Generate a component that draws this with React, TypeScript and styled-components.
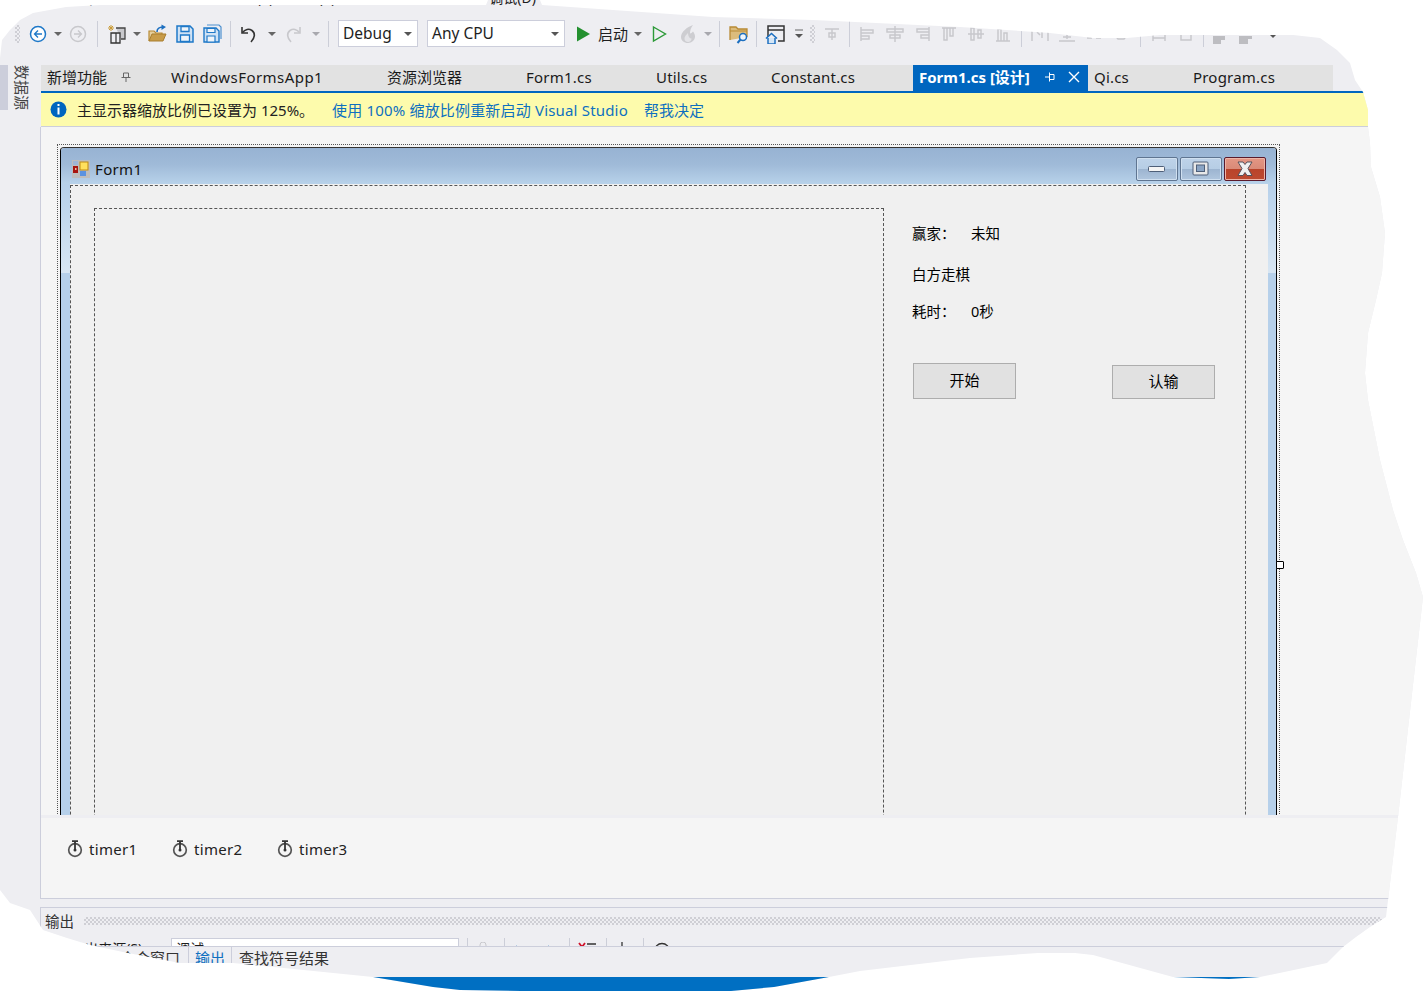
import React from "react";
import styled, { createGlobalStyle } from "styled-components";

const Global = createGlobalStyle`
  html, body { margin: 0; padding: 0; background: #fff; }
  body { font-family: "Noto Sans", "Noto Sans CJK SC", sans-serif; overflow: hidden; }
`;

const outline = [
  [0,58],[2,40],[10,30],[20,20],[33,13],[66,7],[100,5],[486,5],[488,0],[540,0],[542,5],[613,10],[713,17],[813,20],[960,27],
  [1050,33],[1093,38],[1127,38],[1160,35],[1293,35],[1320,38],[1337,50],[1350,63],[1355,80],[1363,92],[1368,110],[1368,127],
  [1370,143],[1371,167],[1380,197],[1385,233],[1382,273],[1376,300],[1368,333],[1365,373],[1368,400],[1380,460],[1393,510],
  [1403,540],[1416,573],[1423,597],[1398,817],[1386,917],[1370,927],[1356,937],[1343,947],[1327,963],[1260,977],[1229,979],
  [1173,977],[1093,955],[1075,953],[1038,953],[970,958],[860,971],[829,977],[774,987],[731,991],[521,991],[460,990],[433,987],
  [373,977],[233,963],[180,963],[123,952],[90,945],[67,938],[43,930],[30,910],[10,903],[0,890],
].map(([x, y]) => `${x}px ${y}px`).join(",");

const Root = styled.div`
  width: 1423px; height: 991px; background: #eeeef2; color: #1e1e1e;
  display: flex; flex-direction: column; overflow: hidden;
  clip-path: polygon(${outline});
  font-size: 15px;
`;
const MenuBar = styled.div`
  height: 20px; display: flex; align-items: flex-start; font-size: 14px; line-height: 20px;
`;
const MenuItem = styled.span<{ $ml: number }>`
  margin-left: ${p => p.$ml}px; margin-top: -12px; white-space: nowrap; color: #1e1e1e;
`;
const Toolbar = styled.div`
  height: 27px; padding-left: 15px; display: flex; align-items: center; margin-bottom: 18px;
`;
const Tool = styled.div<{ $w?: number; $ml?: number }>`
  width: ${p => p.$w ?? 20}px; height: 22px; margin-left: ${p => p.$ml ?? 0}px; flex: none;
  display: flex; align-items: center; justify-content: center;
`;
const Grip = styled.div<{ $ml?: number }>`
  width: 5px; height: 18px; flex: none; margin-left: ${p => p.$ml ?? 0}px;
  background: conic-gradient(#cfcfd5 25%, transparent 0 50%, #cfcfd5 0 75%, transparent 0) 0 0 / 4px 4px;
`;
const Sep = styled.div<{ $ml?: number }>`
  width: 1px; height: 26px; flex: none; background: #ccced8; margin-left: ${p => p.$ml ?? 0}px;
`;
const Combo = styled.div<{ $w: number; $ml: number }>`
  width: ${p => p.$w}px; height: 27px; margin-left: ${p => p.$ml}px; flex: none; box-sizing: border-box;
  background: #fff; border: 1px solid #cccedb; padding: 0 4px; position: relative;
  font-size: 15.5px; line-height: 25px; color: #1e1e1e;
`;
const ComboArrow = styled.span`
  position: absolute; right: 5px; top: 11px; width: 0; height: 0;
  border-left: 4px solid transparent; border-right: 4px solid transparent; border-top: 4px solid #555;
`;
const ToolLabel = styled.div<{ $ml: number }>`
  width: 32px; margin-left: ${p => p.$ml}px; flex: none; font-size: 15px; white-space: nowrap; color: #1e1e1e;
`;
const Caret = styled.span<{ $off?: boolean }>`
  width: 0; height: 0; border-left: 4px solid transparent; border-right: 4px solid transparent;
  border-top: 4px solid ${p => (p.$off ? "#a8a8ae" : "#666")};
`;
const Body = styled.div`
  display: flex; flex: 1; min-height: 0;
`;
const SideRail = styled.div`
  width: 40px; flex: none; display: flex; align-items: flex-start;
`;
const RailMarker = styled.div`
  width: 8px; height: 45px; background: #cccedb;
`;
const RailLabel = styled.div`
  writing-mode: vertical-rl; text-orientation: sideways; margin-left: 6px; width: 16px; height: 45px;
  font-size: 15px; line-height: 16px; color: #444; white-space: nowrap;
`;
const Main = styled.div`
  flex: 1; min-width: 0; display: flex; flex-direction: column; margin-left: 0;
`;
const TabStrip = styled.div`
  display: flex; height: 26px; margin-left: 1px; width: 1292px; background: #e2e2e2;
`;
const Tab = styled.div<{ $w: number; $active?: boolean; $ls?: number }>`
  width: ${p => p.$w}px; flex: none; box-sizing: border-box; padding: 0 0 2px 6px;
  display: flex; align-items: center; position: relative; white-space: nowrap;
  font-size: 15px; line-height: 24px;
  letter-spacing: ${p => p.$ls ?? 0}px;
  font-weight: ${p => (p.$active ? 700 : 400)};
  background: ${p => (p.$active ? "#0066bf" : "transparent")};
  color: ${p => (p.$active ? "#fff" : "#1a1a1a")};
`;
const TabIcon = styled.span<{ $ml: number }>`
  margin-left: ${p => p.$ml}px; display: inline-flex; font-weight: 400;
`;
const Accent = styled.div`
  height: 2px; background: #0066bf; margin-left: 1px;
`;
const InfoBar = styled.div`
  height: 33px; margin-left: 1px; display: flex; align-items: center; padding-left: 9px;
  background: #fdfbac; border-bottom: 1px solid #cccedb; white-space: nowrap; font-size: 15px; color: #222;
`;
const InfoText = styled.span`
  margin-left: 10px; width: 255px;
`;
const InfoLink = styled.span<{ $w?: number; $ls?: number }>`
  color: #0e70c0; width: ${p => (p.$w ? `${p.$w}px` : "auto")}; letter-spacing: ${p => p.$ls ?? 0}px;
`;
const Surface = styled.div`
  height: 688px; background: #f5f5f5; border-left: 1px solid #cccedb; overflow: hidden;
  padding: 17px 0 0 16px; box-sizing: border-box;
`;
const Selection = styled.div`
  width: 1223px; height: 800px; box-sizing: border-box; border: 1px dotted #555; padding: 2px 0 0 2px; position: relative;
`;
const Handle = styled.div`
  position: absolute; right: -5px; top: 416px; width: 8px; height: 8px; box-sizing: border-box;
  background: #fff; border: 1px solid #000; border-radius: 1px;
`;
const FormWindow = styled.div`
  width: 1217px; height: 780px; box-sizing: border-box; border: 1px solid #111; border-radius: 4px 4px 0 0;
  border-color: #333 #000 #000 #000; display: flex; flex-direction: column;
`;
const TitleBar = styled.div`
  height: 36px; flex: none; box-sizing: border-box; display: flex; align-items: center; padding: 6px 0 0 11px;
  background: linear-gradient(#97b3d3, #9fbad8 45%, #b8d2ea);
  border-radius: 3px 3px 0 0; font-size: 15px; color: #111;
`;
const FormTitle = styled.span`
  margin-left: 5px; flex: 1; letter-spacing: .35px;
`;
const CaptionGroup = styled.div`
  display: flex; gap: 2px; margin-right: 10px;
`;
const CaptionButton = styled.div<{ $danger?: boolean }>`
  width: 42px; height: 24px; box-sizing: border-box; border-radius: 2px;
  display: flex; align-items: center; justify-content: center;
  border: 1px solid ${p => (p.$danger ? "#5a1a2c" : "#5f7591")};
  box-shadow: inset 0 0 0 1px ${p => (p.$danger ? "#eeb5a8" : "#d0e0f0")};
  background: ${p => p.$danger
    ? "linear-gradient(#e49684, #d98a78 50%, #b9432b 50%, #bd4a30)"
    : "linear-gradient(#bed3e9, #b6cde5 50%, #9cb4d0 50%, #b0c6de)"};
`;
const Frame = styled.div`
  flex: 1; display: flex; min-height: 0;
`;
const SideBorder = styled.div<{ $w: number }>`
  width: ${p => p.$w}px; flex: none;
  background: linear-gradient(#b6d0ea 0, #d8e6f3 89px, #b6d0ea 89px);
`;
const Client = styled.div`
  flex: 1; background: #f0f0f0; padding-top: 1px; overflow: hidden;
`;
const FormPanel = styled.div`
  width: 1176px; height: 800px; box-sizing: border-box; border: 1px dashed #555; border-bottom: none;
  padding: 22px 0 0 23px; position: relative;
`;
const BoardPanel = styled.div`
  width: 790px; height: 760px; box-sizing: border-box; border: 1px dashed #555; border-bottom: none;
`;
const FormLabel = styled.span<{ $x: number; $y: number }>`
  position: absolute; left: ${p => p.$x}px; top: ${p => p.$y}px; line-height: 18px; white-space: nowrap;
  font-size: 14.5px; color: #000;
`;
const FormButton = styled.div<{ $x: number; $y: number; $h: number }>`
  position: absolute; left: ${p => p.$x}px; top: ${p => p.$y}px; width: 103px; height: ${p => p.$h}px;
  box-sizing: border-box; background: #e1e1e1; border: 1px solid #adadad; padding-bottom: 3px;
  display: flex; align-items: center; justify-content: center; font-size: 15px; color: #000;
`;
const TrayGap = styled.div`
  height: 3px; background: #eeeef2; border-left: 1px solid #cccedb;
`;
const Tray = styled.div`
  height: 81px; box-sizing: border-box; background: #f5f5f5; border-left: 1px solid #cccedb; border-bottom: 1px solid #cccedb;
  display: flex; padding: 20px 0 0 26px; align-items: flex-start;
`;
const TrayItem = styled.div`
  width: 105px; display: flex; align-items: center; gap: 6px; font-size: 15px; height: 22px; color: #222; letter-spacing: .3px;
`;
const OutputPanel = styled.div`
  margin-top: 8px; border-top: 1px solid #cccedb; border-left: 1px solid #cccedb; flex: 1; display: flex; flex-direction: column;
`;
const OutputHead = styled.div`
  height: 26px; flex: none; display: flex; align-items: center; padding: 0 0 1px 4px; box-sizing: border-box; font-size: 14.500px; color: #333;
`;
const OutputGrip = styled.div`
  margin-left: 10px; width: 1298px; height: 8px;
  background: conic-gradient(#cfcfd5 25%, transparent 0 50%, #cfcfd5 0 75%, transparent 0) 0 0 / 4px 4px;
`;
const OutputTools = styled.div`
  height: 12px; flex: none; overflow: hidden; display: flex; align-items: flex-start; padding-top: 4px; box-sizing: border-box; font-size: 14px;
`;
const SourceLabel = styled.span`
  width: 130px; box-sizing: border-box; line-height: 20px; padding: 1px 25px 0 0; text-align: right; white-space: nowrap; color: #1e1e1e;
`;
const SourceBox = styled.div`
  width: 288px; height: 24px; margin-left: 0; box-sizing: border-box; background: #fff; border: 1px solid #cccedb;
  padding-left: 4px; line-height: 20px; flex: none;
`;
const MiniSep = styled.i<{ $ml: number }>`
  width: 1px; height: 10px; background: #ccced8; flex: none; margin-left: ${p => p.$ml}px; display: block;
`;
const MiniIcon = styled.span<{ $ml: number }>`
  display: block; flex: none; margin-left: ${p => p.$ml}px; height: 12px; margin-top: 1px;
`;
const BottomTabs = styled.div`
  height: 30px; flex: none; display: flex; border-top: 1px solid #cccedb; padding-left: 79px; font-size: 15px; line-height: 22px; color: #333;
`;
const BottomTab = styled.div`
  box-sizing: border-box; padding-left: 7px; white-space: nowrap; height: 22px; color: #333;
`;
const WindowTab = styled(BottomTab)`
  width: 68px; padding-left: 0;
`;
const ActiveBottomTab = styled(BottomTab)`
  padding: 0 6px; color: #0e70c0; border-left: 1px solid #cccedb; border-right: 1px solid #cccedb;
`;
const StatusBar = styled.div`
  height: 14px; flex: none; background: #006fc2; margin-left: -40px;
`;

const Svg: React.FC<{ w?: number; h?: number; children: React.ReactNode }> = ({ w = 20, h = 20, children }) => (
  <svg width={w} height={h} viewBox={`0 0 ${w} ${h}`} fill="none">{children}</svg>
);

const Circle: React.FC<{ c: string; dir: "l" | "r" }> = ({ c, dir }) => (
  <Svg>
    <circle cx="10" cy="10" r="7.500" stroke={c} strokeWidth="1.500" fill="#fff" fillOpacity={dir === "l" ? 0.9 : 0} />
    <path d={dir === "l" ? "M14 10H6.500M10 6.500 6.500 10l3.500 3.500" : "M6 10h7.500M10 6.500l3.500 3.500L10 13.500"} stroke={c} strokeWidth="1.300" />
  </Svg>
);
const NewProject = () => (
  <Svg>
    <path d="M4 1v6M1 4h6M2 2l4 4M6 2 2 6" stroke="#c99a35" strokeWidth="1" />
    <path d="M9 4h9v11h-4" stroke="#444" strokeWidth="1.300" fill="#c8c8cc" />
    <path d="M4 9h9v10H4z" stroke="#333" strokeWidth="1.300" fill="#eeeef2" />
    <path d="M9 9v10" stroke="#333" strokeWidth="1.200" />
  </Svg>
);
const OpenFolder = () => (
  <Svg>
    <path d="M1 17V7h5l2 2h6v2" stroke="#b88a35" strokeWidth="1.200" fill="#e6cf9e" />
    <path d="M1 17l3-7h14l-3 7z" fill="#c89c4a" stroke="#a97e2f" />
    <path d="M9 8c0-3 2-5 6-5" stroke="#1c6fc0" strokeWidth="1.600" />
    <path d="M13.500 0.500 18 3l-4.500 3z" fill="#1c6fc0" />
  </Svg>
);
const Save = () => (
  <Svg>
    <path d="M2 2h13l3 3v13H2z" fill="#cfe2f5" stroke="#1e78c8" strokeWidth="1.500" />
    <path d="M6 2.500h8v5H6zM5.500 11h9v6.500h-9z" fill="#eef4fa" stroke="#1e78c8" strokeWidth="1.300" />
  </Svg>
);
const SaveAll = () => (
  <Svg>
    <path d="M5 1h12l2 2v12" stroke="#4d90cf" strokeWidth="1.200" />
    <path d="M2 4h12l3 3v11H2z" fill="#cfe2f5" stroke="#1e78c8" strokeWidth="1.400" />
    <path d="M5 4.500h8v4H5zM5 12h8v6H5z" fill="#eef4fa" stroke="#1e78c8" strokeWidth="1.200" />
  </Svg>
);
const Undo: React.FC<{ c: string; flip?: boolean }> = ({ c, flip }) => (
  <svg width="22" height="22" viewBox="0 0 20 20" fill="none" style={flip ? { transform: "scaleX(-1)" } : undefined}>
    <path d="M3 3v6h6" stroke={c} strokeWidth="1.600" />
    <path d="M3.500 8.500C6 5 10 4.500 13 6.500c3.500 2.500 3 7.500-1 11.500" stroke={c} strokeWidth="1.600" />
  </svg>
);
const Play = () => (
  <Svg><path d="M4 2.500 17 10 4 17.500z" fill="#23902f" /></Svg>
);
const PlayOutline = () => (
  <Svg><path d="M4.500 3 16.500 10 4.500 17z" stroke="#2c9a38" strokeWidth="1.400" fill="none" /></Svg>
);
const Flame = () => (
  <svg width="22" height="22" viewBox="0 0 20 20" fill="none">
    <path d="M15 1C9 3 3 8 3 13c0 3.500 3 6 7 6s7-3 7-6.500c0-2-1-4-2-5-1 1-2 2-3 2 0-3 1-6 3-8.500z" fill="#cdcdd1" />
    <path d="M10 9c-2 2-3.500 3.500-3.500 5.500S8 18 10 18s3.500-1.500 3.500-3.500c-2 0-3.500-2-3.500-5.500z" fill="#e4e4e8" />
  </svg>
);
const FolderSearch = () => (
  <Svg>
    <path d="M1 16V3h6l2 2h9v8" fill="#dcbc7c" stroke="#b88a35" strokeWidth="1.300" />
    <path d="M1 7h17" stroke="#b88a35" />
    <circle cx="14" cy="13" r="3.500" fill="#eef4fa" stroke="#1c6fc0" strokeWidth="1.500" />
    <path d="M11.500 15.500 8.500 19" stroke="#1c6fc0" strokeWidth="2" />
  </Svg>
);
const WindowHome = () => (
  <Svg>
    <path d="M3 13V2h16v15h-6" stroke="#333" strokeWidth="1.500" />
    <path d="M3 6h16" stroke="#333" strokeWidth="1.500" />
    <path d="M1 14.500 6.500 9.500 12 14.500" stroke="#1c6fc0" strokeWidth="1.600" />
    <path d="M3 14v6h7v-6" fill="#d5e6f6" stroke="#1c6fc0" strokeWidth="1.500" />
  </Svg>
);
const MoreCaret = () => (
  <svg width="10" height="12" viewBox="0 0 10 12" fill="none">
    <path d="M1 2h8" stroke="#666" strokeWidth="1.200" /><path d="M1 6h8l-4 4z" fill="#555" />
  </svg>
);
const Al: React.FC<{ d: string; fill?: boolean }> = ({ d, fill }) => (
  <Svg><path d={d} stroke={fill ? "none" : "#c8c8cc"} fill={fill ? "#bdbdc1" : "none"} strokeWidth="1.500" /></Svg>
);
const Pin: React.FC<{ c: string }> = ({ c }) => (
  <svg width="10" height="10" viewBox="0 0 10 10" fill="none">
    <path d="M2.500 1h5v4.500h-5zM0.500 5.500h9M5 5.500V10" stroke={c} strokeWidth="1" />
  </svg>
);
const SidePin = () => (
  <svg width="10" height="10" viewBox="0 0 10 10" fill="none">
    <path d="M9 2.500v5H4.500v-5zM4.500 .5v9M4.500 5H0" stroke="#fff" strokeWidth="1" />
  </svg>
);
const CloseX = () => (
  <svg width="12" height="12" viewBox="0 0 12 12"><path d="M1 1l10 10M11 1 1 11" stroke="#fff" strokeWidth="1.400" /></svg>
);
const Info = () => (
  <svg width="17" height="17" viewBox="0 0 17 17">
    <circle cx="8.500" cy="8.500" r="8" fill="#0066bf" />
    <rect x="7.500" y="3" width="2" height="2" fill="#fff" />
    <rect x="7.500" y="6.500" width="2" height="7" fill="#fff" />
  </svg>
);
const FormIcon = () => (
  <svg width="18" height="18" viewBox="0 0 18 18">
    <rect width="18" height="18" fill="#bdbdbd" />
    <rect x="1" y="1" width="5" height="4" fill="#9fb6d6" />
    <rect x="1" y="6" width="5" height="7" fill="#a8150f" />
    <rect x="3" y="8" width="1.500" height="2" fill="#e8c0a0" />
    <rect x="8" y="2" width="8" height="8" fill="#ffe05c" stroke="#c08a10" />
    <rect x="8" y="11" width="6" height="5" fill="#5a92e0" />
  </svg>
);
const MinGlyph = () => (
  <svg width="18" height="7" viewBox="0 0 18 7">
    <rect x=".5" y=".5" width="16" height="5" rx="1" fill="#f4f4f4" stroke="#4e5f78" />
  </svg>
);
const MaxGlyph = () => (
  <svg width="18" height="16" viewBox="0 0 18 16">
    <rect x="1" y="1" width="15" height="13" rx="1" fill="#e8e8e8" stroke="#4e5f78" />
    <rect x="4.500" y="4" width="8" height="6.500" fill="#8aa4c4" stroke="#4e5f78" />
  </svg>
);
const CloseGlyph = () => (
  <svg width="20" height="16" viewBox="0 0 20 16">
    <path d="M3 1h5l2 2.500L12 1h5l-4 6.500 4 7h-5l-2-3-2 3H3l4-7z" fill="#f0f0f0" stroke="#55505a" />
  </svg>
);
const Stopwatch = () => (
  <svg width="16" height="18" viewBox="0 0 16 18" fill="none">
    <circle cx="8" cy="10" r="6.300" stroke="#555" strokeWidth="1.700" />
    <path d="M5 1.200h6" stroke="#333" strokeWidth="1.800" />
    <path d="M8 2v8" stroke="#333" strokeWidth="1.800" />
    <circle cx="8" cy="10" r="1.500" fill="#333" />
  </svg>
);

const alignIcons = [
  { ml: 7, d: "M3 3v14M3 6h12v3H3zM3 12h8v3H3z" },
  { ml: 7, d: "M2 5h16v3H2zM5 11h10v3H5zM10 2v16" },
  { ml: 7, d: "M17 3v14M5 5h12v3H5zM9 11h8v3H9z" },
  { ml: 7, d: "M3 4h14M5 4v12h3V4zM11 4v8h3V4z" },
  { ml: 7, d: "M2 10h16M5 4v12h3V4zM12 6v8h3V6z" },
  { ml: 7, d: "M3 17h14M5 5v12h3V5zM11 9v8h3V9z" },
];

export default function App() {
  return (
    <>
      <Global />
      <Root>
        <MenuBar>
          <MenuItem $ml={50}>文件(F)</MenuItem>
          <MenuItem $ml={135}>视图(V)</MenuItem>
          <MenuItem $ml={17}>项目(P)</MenuItem>
          <MenuItem $ml={154}>调试(D)</MenuItem>
        </MenuBar>
        <Toolbar>
          <Grip />
          <Tool $ml={8}><Circle c="#1e78c8" dir="l" /></Tool>
          <Tool><Caret /></Tool>
          <Tool><Circle c="#c8c8cc" dir="r" /></Tool>
          <Sep $ml={9} />
          <Tool $ml={9}><NewProject /></Tool>
          <Tool><Caret /></Tool>
          <Tool $ml={1}><OpenFolder /></Tool>
          <Tool $ml={7}><Save /></Tool>
          <Tool $ml={7}><SaveAll /></Tool>
          <Sep $ml={8} />
          <Tool $ml={8}><Undo c="#333" /></Tool>
          <Tool $ml={3}><Caret /></Tool>
          <Tool $ml={1}><Undo c="#c8c8cc" flip /></Tool>
          <Tool $ml={3}><Caret $off /></Tool>
          <Sep $ml={2} />
          <Combo $w={80} $ml={9}>Debug<ComboArrow /></Combo>
          <Combo $w={138} $ml={9}>Any CPU<ComboArrow /></Combo>
          <Tool $ml={8}><Play /></Tool>
          <ToolLabel $ml={5}>启动</ToolLabel>
          <Tool $w={16}><Caret /></Tool>
          <Tool $ml={3}><PlayOutline /></Tool>
          <Tool $ml={9}><Flame /></Tool>
          <Tool><Caret $off /></Tool>
          <Sep $ml={1} />
          <Tool $ml={9}><FolderSearch /></Tool>
          <Sep $ml={7} />
          <Tool $ml={8}><WindowHome /></Tool>
          <Tool $w={18} $ml={5}><MoreCaret /></Tool>
          <Grip $ml={2} />
          <Tool $ml={7}><Al d="M3 5h14M10 5v11M7 9h6v4H7z" /></Tool>
          <Sep $ml={7} />
          <Tool $ml={8}><Al d={alignIcons[0].d} /></Tool>
          {alignIcons.slice(1).map((a, i) => (
            <Tool key={i} $ml={a.ml}><Al d={a.d} /></Tool>
          ))}
          <Sep $ml={8} />
          <Tool $ml={8}><Al d="M2 5v12M18 5v12M7 8l3 3M12 8v6" /></Tool>
          <Tool $ml={7}><Al d="M2 17h16M10 8v7M6 13h8" /></Tool>
          <Tool $ml={7}><Al d="M3 10l4 3M17 10l-4 3M3 14h5M12 14h5" /></Tool>
          <Tool $ml={7}><Al d="M3 10l4 5h6l4-5" /></Tool>
          <Sep $ml={9} />
          <Tool $ml={8}><Al d="M4 10v7M16 10v7M4 14h12" /></Tool>
          <Tool $ml={7}><Al d="M5 10h10v6H5z" /></Tool>
          <Sep $ml={7} />
          <Tool $ml={6}><Al fill d="M3 12h8v8H3zM11 12h4v4h-4z" /></Tool>
          <Tool $ml={6}><Al fill d="M3 12h9v8H3zM12 12h4v3h-4z" /></Tool>
          <Tool $ml={7}><MoreCaret /></Tool>
        </Toolbar>
        <Body>
          <SideRail>
            <RailMarker />
            <RailLabel>数据源</RailLabel>
          </SideRail>
          <Main>
            <TabStrip>
              <Tab $w={124}>新增功能<TabIcon $ml={14}><Pin c="#666" /></TabIcon></Tab>
              <Tab $w={216} $ls={0.45}>WindowsFormsApp1</Tab>
              <Tab $w={139}>资源浏览器</Tab>
              <Tab $w={130} $ls={0.22}>Form1.cs</Tab>
              <Tab $w={115} $ls={0.2}>Utils.cs</Tab>
              <Tab $w={148} $ls={0.2}>Constant.cs</Tab>
              <Tab $w={175} $active>
                Form1.cs [设计]
                <TabIcon $ml={15}><SidePin /></TabIcon>
                <TabIcon $ml={13}><CloseX /></TabIcon>
              </Tab>
              <Tab $w={99} $ls={0.2}>Qi.cs</Tab>
              <Tab $w={146} $ls={0.2}>Program.cs</Tab>
            </TabStrip>
            <Accent />
            <InfoBar>
              <Info />
              <InfoText>主显示器缩放比例已设置为 125%。</InfoText>
              <InfoLink $w={312} $ls={0.18}>使用 100% 缩放比例重新启动 Visual Studio</InfoLink>
              <InfoLink>帮我决定</InfoLink>
            </InfoBar>
            <Surface>
              <Selection>
                <Handle />
                <FormWindow>
                  <TitleBar>
                    <FormIcon />
                    <FormTitle>Form1</FormTitle>
                    <CaptionGroup>
                      <CaptionButton><MinGlyph /></CaptionButton>
                      <CaptionButton><MaxGlyph /></CaptionButton>
                      <CaptionButton $danger><CloseGlyph /></CaptionButton>
                    </CaptionGroup>
                  </TitleBar>
                  <Frame>
                    <SideBorder $w={9} />
                    <Client>
                      <FormPanel>
                        <BoardPanel />
                        <FormLabel $x={841} $y={38}>赢家：</FormLabel>
                        <FormLabel $x={900} $y={38}>未知</FormLabel>
                        <FormLabel $x={841} $y={79}>白方走棋</FormLabel>
                        <FormLabel $x={841} $y={116}>耗时：</FormLabel>
                        <FormLabel $x={900} $y={116}>0秒</FormLabel>
                        <FormButton $x={842} $y={177} $h={36}>开始</FormButton>
                        <FormButton $x={1041} $y={179} $h={34}>认输</FormButton>
                      </FormPanel>
                    </Client>
                    <SideBorder $w={8} />
                  </Frame>
                </FormWindow>
              </Selection>
            </Surface>
            <TrayGap />
            <Tray>
              <TrayItem><Stopwatch />timer1</TrayItem>
              <TrayItem><Stopwatch />timer2</TrayItem>
              <TrayItem><Stopwatch />timer3</TrayItem>
            </Tray>
            <OutputPanel>
              <OutputHead>输出<OutputGrip /></OutputHead>
              <OutputTools>
                <SourceLabel>显示输出来源(S):</SourceLabel>
                <SourceBox>调试</SourceBox>
                <MiniSep $ml={8} />
                <MiniIcon $ml={10}>
                  <svg width="10" height="12"><path d="M2 12V3a3 3 0 0 1 6 0v9" stroke="#c8c8cc" fill="none" /></svg>
                </MiniIcon>
                <MiniSep $ml={16} />
                <MiniIcon $ml={8}>
                  <svg width="12" height="12"><path d="M1 7h10M1 7l3-3" stroke="#1c6fc0" strokeWidth="1.500" fill="none" /></svg>
                </MiniIcon>
                <MiniIcon $ml={15}>
                  <svg width="12" height="12"><path d="M1 7h10M11 7 8 4" stroke="#1c6fc0" strokeWidth="1.500" fill="none" /></svg>
                </MiniIcon>
                <MiniSep $ml={17} />
                <MiniIcon $ml={8}>
                  <svg width="20" height="12"><path d="M1 1l3 4 3-4M4 5v6" stroke="#d0142c" strokeWidth="1.800" fill="none" /><path d="M9 2h9M9 6h9" stroke="#333" strokeWidth="1.500" /></svg>
                </MiniIcon>
                <MiniSep $ml={8} />
                <MiniIcon $ml={8}>
                  <svg width="14" height="12"><path d="M7 0v12M2 6h10v5H2z" stroke="#333" strokeWidth="1.300" fill="none" /></svg>
                </MiniIcon>
                <MiniSep $ml={14} />
                <MiniIcon $ml={9}>
                  <svg width="18" height="12"><circle cx="9" cy="9" r="7.500" stroke="#333" strokeWidth="1.300" fill="none" /><path d="M9 4v5" stroke="#333" /></svg>
                </MiniIcon>
              </OutputTools>
              <BottomTabs>
                <WindowTab>命令窗口</WindowTab>
                <ActiveBottomTab>输出</ActiveBottomTab>
                <BottomTab>查找符号结果</BottomTab>
              </BottomTabs>
              <StatusBar />
            </OutputPanel>
          </Main>
        </Body>
      </Root>
    </>
  );
}
